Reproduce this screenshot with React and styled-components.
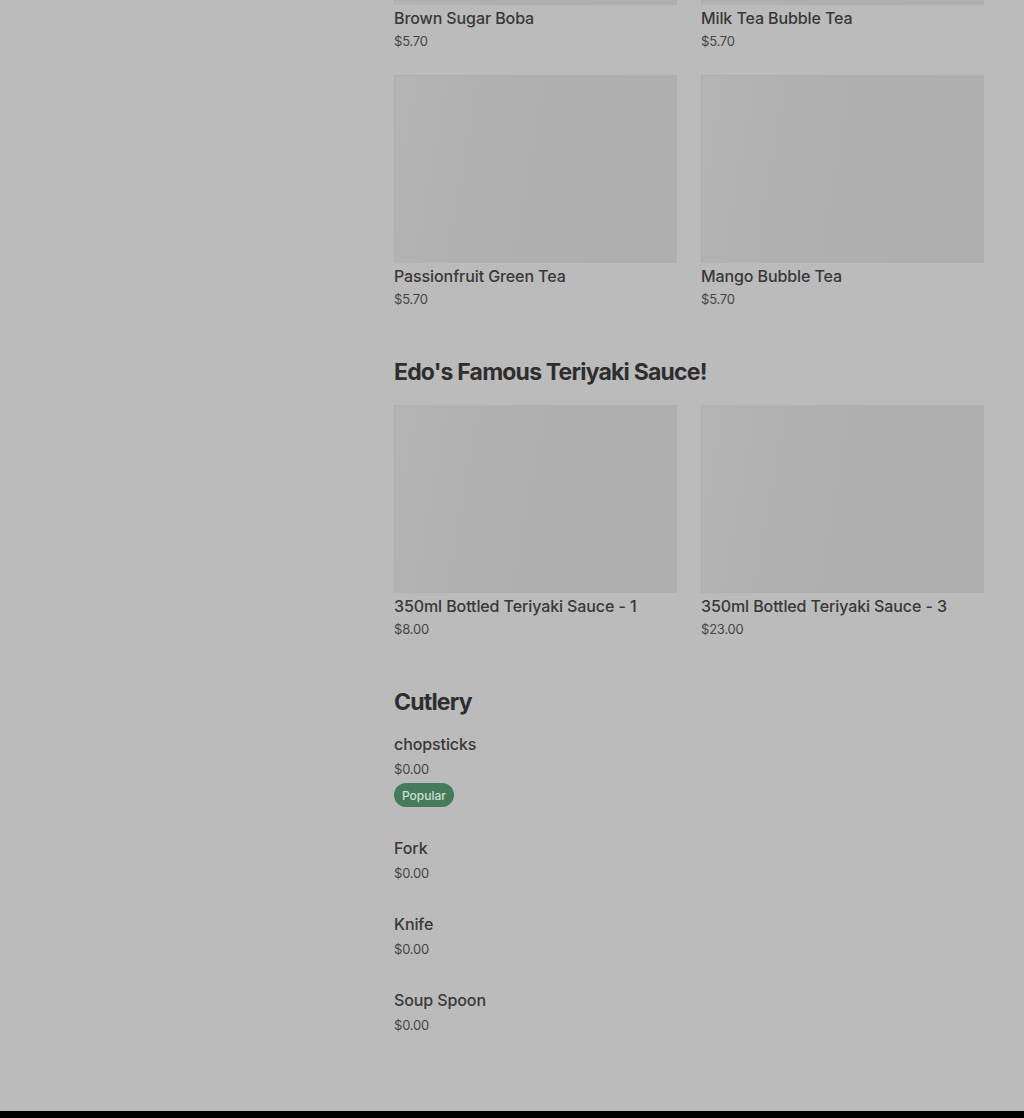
import React from "react";
import styled, { createGlobalStyle } from "styled-components";

const sections = [
  {
    title: null,
    cropTop: true,
    items: [
      { name: "Brown Sugar Boba", price: "$5.70" },
      { name: "Milk Tea Bubble Tea", price: "$5.70" },
      { name: "Passionfruit Green Tea", price: "$5.70" },
      { name: "Mango Bubble Tea", price: "$5.70" },
    ],
  },
  {
    title: "Edo's Famous Teriyaki Sauce!",
    items: [
      { name: "350ml Bottled Teriyaki Sauce - 1", price: "$8.00" },
      { name: "350ml Bottled Teriyaki Sauce - 3", price: "$23.00" },
    ],
  },
];

const cutlery = [
  { name: "chopsticks", price: "$0.00", popular: true },
  { name: "Fork", price: "$0.00" },
  { name: "Knife", price: "$0.00" },
  { name: "Soup Spoon", price: "$0.00" },
];

export default function App() {
  return (
    <>
      <GlobalStyle />
      <Page>
        <Sidebar />
        <Main>
          {sections.map((section, si) => (
            <Section key={si}>
              {section.title && <Heading>{section.title}</Heading>}
              <Grid>
                {section.items.map((item, i) => (
                  <Card key={item.name}>
                    <Picture $crop={section.cropTop && i < 2} />
                    <Name>{item.name}</Name>
                    <Price>{item.price}</Price>
                  </Card>
                ))}
              </Grid>
            </Section>
          ))}
          <Section>
            <Heading $tight>Cutlery</Heading>
            <List>
              {cutlery.map((item) => (
                <Row key={item.name}>
                  <Name>{item.name}</Name>
                  <Price $loose>{item.price}</Price>
                  {item.popular && <Badge>Popular</Badge>}
                </Row>
              ))}
            </List>
          </Section>
        </Main>
      </Page>
      <Footer />
    </>
  );
}

const GlobalStyle = createGlobalStyle`
  html, body {
    margin: 0;
    padding: 0;
    background: #bbbbbb;
  }
  body {
    font-family: Inter, "Liberation Sans", sans-serif;
    -webkit-font-smoothing: antialiased;
  }
`;

const Page = styled.div`
  display: flex;
  min-height: 1111px;
  background: #bbbbbb;
`;

const Sidebar = styled.aside`
  width: 394px;
  flex-shrink: 0;
`;

const Main = styled.main`
  width: 590px;
  padding-bottom: 76px;
`;

const Section = styled.section`
  & + & {
    margin-top: 49px;
  }
`;

const Heading = styled.h2`
  margin: 0 0 ${(p) => (p.$tight ? "16px" : "19px")};
  font-size: 23px;
  line-height: 28px;
  font-weight: 700;
  letter-spacing: -0.8px;
  color: #2e2e2e;
`;

const Grid = styled.div`
  display: grid;
  grid-template-columns: repeat(2, 283px);
  column-gap: 24px;
  row-gap: 24px;
`;

const Card = styled.div`
  display: flex;
  flex-direction: column;
  cursor: pointer;
`;

const Picture = styled.div`
  height: ${(p) => (p.$crop ? "5px" : "188px")};
  margin-bottom: 1px;
  background: linear-gradient(100deg, #b4b4b4 0%, #b0b0b0 35%, #afafaf 100%);
  box-shadow: inset 1px 1px 0 #aeaeae;
`;

const Name = styled.div`
  font-size: 16px;
  line-height: 24px;
  font-weight: 500;
  color: #383838;
  letter-spacing: -0.1px;
`;

const Price = styled.div`
  margin-top: ${(p) => (p.$loose ? "3px" : "1px")};
  font-size: 13px;
  line-height: 20px;
  color: #454545;
  letter-spacing: -0.2px;
`;

const List = styled.div`
  display: flex;
  flex-direction: column;
  gap: 29px;
`;

const Row = styled.div`
  display: flex;
  flex-direction: column;
  align-items: flex-start;
`;

const Badge = styled.span`
  margin-top: 4px;
  height: 24px;
  padding: 0 8px;
  display: inline-flex;
  align-items: center;
  border-radius: 12px;
  background: #437b5b;
  color: #cfe0d4;
  font-size: 12px;
  font-weight: 500;
`;

const Footer = styled.footer`
  height: 7px;
  background: #000;
`;
